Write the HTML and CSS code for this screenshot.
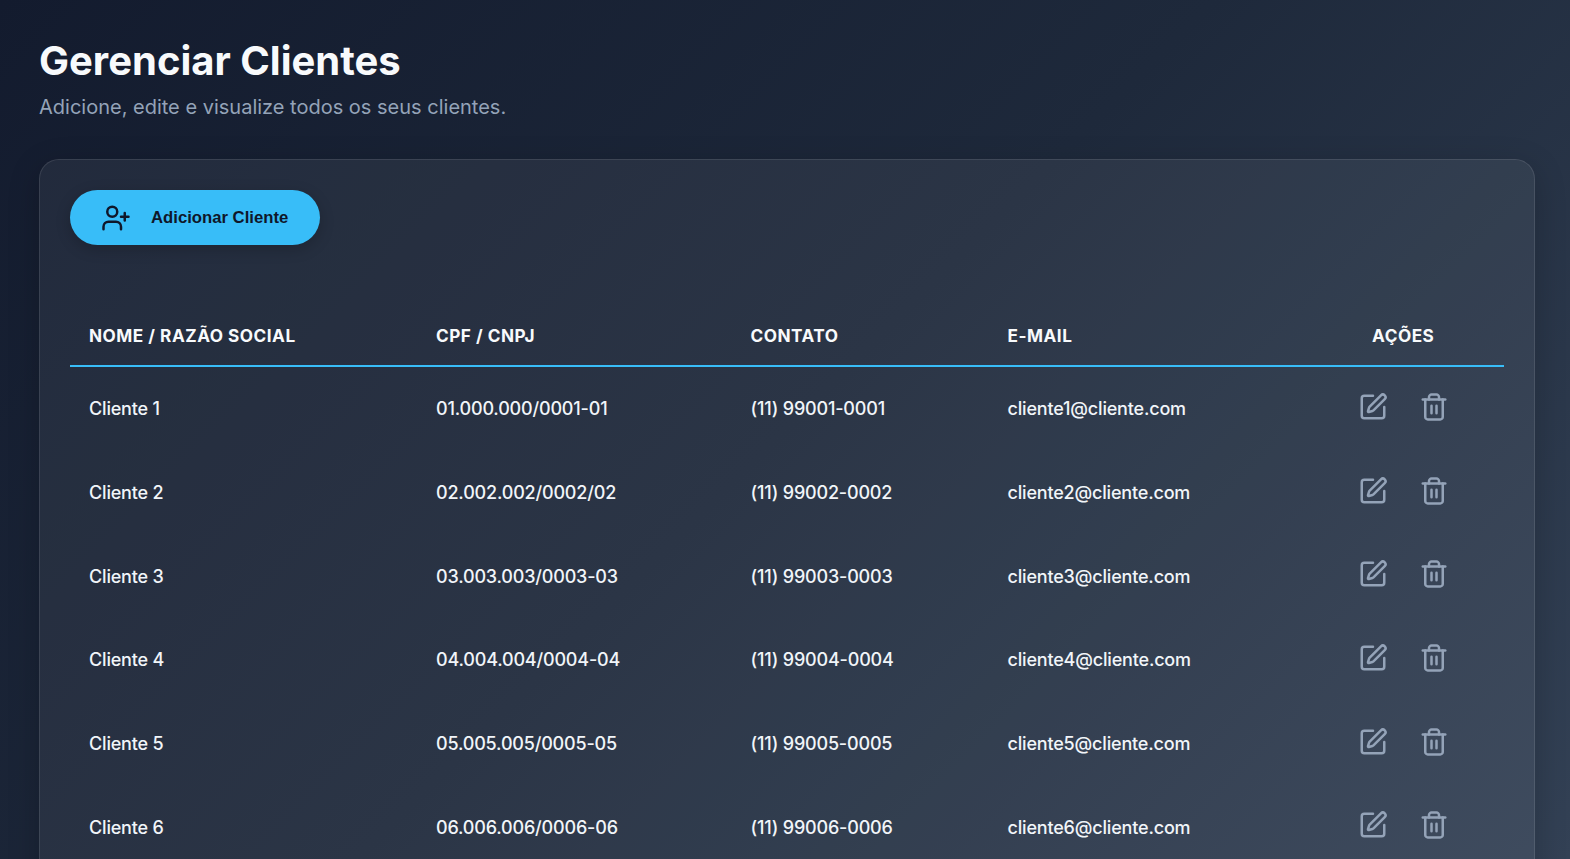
FILE: index.html
```html
<!DOCTYPE html>
<html lang="pt-BR">

<head>
    <meta charset="UTF-8">
    <meta name="viewport" content="width=device-width, initial-scale=1.0">
    <title>Gerenciar Clientes</title>
    <link rel="stylesheet" href="styles.css">
</head>

<body>

    <!-- Icons -->
    <svg class="sprite" aria-hidden="true">
        <symbol id="icon-user-plus" viewBox="0 0 24 24">
            <path d="M16 21v-2a4 4 0 0 0-4-4H6a4 4 0 0 0-4 4v2"/>
            <circle cx="9" cy="7" r="4"/>
            <path d="M19 8v6M22 11h-6"/>
        </symbol>
        <symbol id="icon-edit" viewBox="0 0 24 24">
            <path d="M12 3H5a2 2 0 0 0-2 2v14a2 2 0 0 0 2 2h14a2 2 0 0 0 2-2v-7"/>
            <path d="M18.375 2.625a1 1 0 0 1 3 3l-9.013 9.014a2 2 0 0 1-.853.505l-2.873.84a.5.5 0 0 1-.62-.62l.84-2.873a2 2 0 0 1 .506-.852z"/>
        </symbol>
        <symbol id="icon-trash" viewBox="0 0 24 24">
            <path d="M3 6h18"/>
            <path d="M19 6v14c0 1-1 2-2 2H7c-1 0-2-1-2-2V6"/>
            <path d="M8 6V4c0-1 1-2 2-2h4c1 0 2 1 2 2v2"/>
            <path d="M10 11v6M14 11v6"/>
        </symbol>
    </svg>

    <main class="container">
        <header class="page-header">
            <h1>Gerenciar Clientes</h1>
            <p>Adicione, edite e visualize todos os seus clientes.</p>
        </header>

        <section class="card">
            <button class="btn-add">
                <svg class="icon"><use href="#icon-user-plus"/></svg>
                Adicionar Cliente
            </button>

            <table class="clients-table">
                <thead>
                    <tr>
                        <th class="col-name">Nome / Razão Social</th>
                        <th class="col-doc">CPF / CNPJ</th>
                        <th class="col-phone">Contato</th>
                        <th class="col-email">E-mail</th>
                        <th class="col-actions">Ações</th>
                    </tr>
                </thead>
                <tbody id="clientsList"></tbody>
            </table>
        </section>
    </main>

    <script>
        const clients = [
            { name: 'Cliente 1', doc: '01.000.000/0001-01', phone: '(11) 99001-0001', email: 'cliente1@cliente.com' },
            { name: 'Cliente 2', doc: '02.002.002/0002/02', phone: '(11) 99002-0002', email: 'cliente2@cliente.com' },
            { name: 'Cliente 3', doc: '03.003.003/0003-03', phone: '(11) 99003-0003', email: 'cliente3@cliente.com' },
            { name: 'Cliente 4', doc: '04.004.004/0004-04', phone: '(11) 99004-0004', email: 'cliente4@cliente.com' },
            { name: 'Cliente 5', doc: '05.005.005/0005-05', phone: '(11) 99005-0005', email: 'cliente5@cliente.com' },
            { name: 'Cliente 6', doc: '06.006.006/0006-06', phone: '(11) 99006-0006', email: 'cliente6@cliente.com' }
        ];

        function renderClients() {
            const clientsList = document.getElementById('clientsList');
            clientsList.innerHTML = clients.map(client => `
                <tr>
                    <td>${client.name}</td>
                    <td>${client.doc}</td>
                    <td>${client.phone}</td>
                    <td>${client.email}</td>
                    <td>
                        <div class="actions">
                            <button class="btn-icon" aria-label="Editar"><svg class="icon"><use href="#icon-edit"/></svg></button>
                            <button class="btn-icon" aria-label="Excluir"><svg class="icon"><use href="#icon-trash"/></svg></button>
                        </div>
                    </td>
                </tr>
            `).join('');
        }

        renderClients();
    </script>
</body>

</html>
```
FILE: styles.css
```css
* {
    box-sizing: border-box;
    margin: 0;
    padding: 0;
}

body {
    height: 100vh;
    overflow: hidden;
    font-family: 'Inter', sans-serif;
    background: linear-gradient(135deg, #131b2e 0%, #1e293b 50%, #334155 100%);
    color: #f8fafc;
}

.sprite {
    display: none;
}

.container {
    padding: 36px 35px 40px 39px;
}

.page-header {
    margin-bottom: 37px;
}

.page-header h1 {
    font-size: 40px;
    font-weight: 700;
    line-height: 50px;
}

.page-header p {
    margin-top: 6px;
    font-size: 20px;
    line-height: 30px;
    color: #94a3b8;
}

.card {
    min-height: 900px;
    padding: 30px;
    background: rgba(255, 255, 255, 0.06);
    border: 1px solid rgba(255, 255, 255, 0.1);
    border-radius: 20px;
    box-shadow: 0 8px 32px rgba(0, 0, 0, 0.2);
}

.icon {
    flex-shrink: 0;
    width: 30px;
    height: 30px;
    fill: none;
    stroke: currentColor;
    stroke-width: 2;
    stroke-linecap: round;
    stroke-linejoin: round;
}

.btn-add {
    display: flex;
    align-items: center;
    gap: 20px;
    width: 250px;
    height: 55px;
    padding: 0 30px 0 31px;
    border: none;
    border-radius: 50px;
    background: #38bdf8;
    color: #0f172a;
    font-family: 'Liberation Sans', Arial, sans-serif;
    font-size: 16.7px;
    font-weight: 600;
    white-space: nowrap;
    box-shadow: 0 4px 15px rgba(0, 0, 0, 0.2);
    cursor: pointer;
}

.clients-table {
    width: 100%;
    margin-top: 61px;
    border-collapse: separate;
    border-spacing: 0;
    table-layout: fixed;
}

.clients-table th {
    height: 61px;
    padding: 0 19px;
    border-bottom: 2px solid #38bdf8;
    font-size: 17.2px;
    font-weight: 700;
    letter-spacing: 0.5px;
    text-align: left;
    text-transform: uppercase;
}

.clients-table td {
    height: 83.7px;
    padding: 0 19px;
    font-size: 18px;
    font-weight: 500;
    letter-spacing: -0.18px;
    color: #f1f5f9;
}

.col-name {
    width: 347px;
}

.col-doc {
    width: 314.5px;
}

.col-phone {
    width: 257px;
}

.col-email {
    width: 314px;
}

.clients-table .col-actions {
    text-align: center;
}

.actions {
    display: flex;
    justify-content: center;
    gap: 11px;
    padding-bottom: 4px;
}

.btn-icon {
    display: flex;
    padding: 10px;
    border: none;
    background: none;
    color: #94a3b8;
    cursor: pointer;
}
```
